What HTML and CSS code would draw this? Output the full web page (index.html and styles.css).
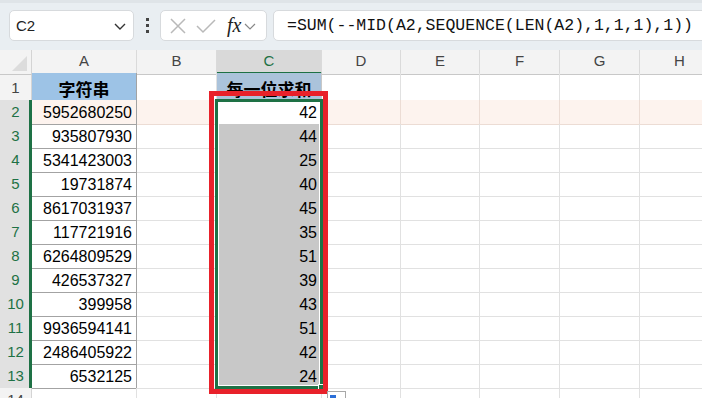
FILE: index.html
```html
<!DOCTYPE html>
<html lang="zh-CN">
<head>
    <meta charset="UTF-8">
    <title>Sheet1</title>
    <link rel="stylesheet" href="styles.css">
</head>
<body>
    <div class="toolbar">
        <div class="namebox">
            <span>C2</span>
            <svg class="chev" width="14" height="14" viewBox="0 0 14 14"><path d="M2 5l5 5 5-5" fill="none" stroke="#333" stroke-width="1.4"/></svg>
        </div>
        <div class="dots"><i></i><i></i><i></i></div>
        <div class="fxbox">
            <svg width="20" height="20" viewBox="0 0 20 20"><path d="M3 3l14 14M17 3L3 17" stroke="#b9b9b9" stroke-width="1.5" fill="none"/></svg>
            <svg width="22" height="20" viewBox="0 0 22 20"><path d="M2 10l6 6L20 4" stroke="#b9b9b9" stroke-width="1.5" fill="none"/></svg>
            <span class="fx">fx</span>
            <svg width="12" height="12" viewBox="0 0 12 12"><path d="M1 4l5 5 5-5" fill="none" stroke="#888" stroke-width="1.2"/></svg>
        </div>
        <div class="formula">=SUM(--MID(A2,SEQUENCE(LEN(A2),1,1,1),1))</div>
    </div>

    <div class="sheet">
        <div class="row head">
            <div class="corner"><b></b></div>
            <div class="ch">A</div>
            <div class="ch">B</div>
            <div class="ch on">C</div>
            <div class="ch">D</div>
            <div class="ch">E</div>
            <div class="ch">F</div>
            <div class="ch">G</div>
            <div class="ch">H</div>
        </div>
        <div class="row r1">
            <div class="rh">1</div>
            <div class="c a title">字符串</div>
            <div class="c"></div>
            <div class="c title alt">每一位求和</div>
            <div class="c"></div><div class="c"></div><div class="c"></div><div class="c"></div><div class="c"></div>
        </div>
        <div class="row cur">
            <div class="rh on">2</div>
            <div class="c a">5952680250</div>
            <div class="c"></div>
            <div class="c active">42</div>
            <div class="c"></div><div class="c"></div><div class="c"></div><div class="c"></div><div class="c"></div>
        </div>
        <div class="row">
            <div class="rh on">3</div>
            <div class="c a">935807930</div>
            <div class="c"></div>
            <div class="c sel">44</div>
            <div class="c"></div><div class="c"></div><div class="c"></div><div class="c"></div><div class="c"></div>
        </div>
        <div class="row">
            <div class="rh on">4</div>
            <div class="c a">5341423003</div>
            <div class="c"></div>
            <div class="c sel">25</div>
            <div class="c"></div><div class="c"></div><div class="c"></div><div class="c"></div><div class="c"></div>
        </div>
        <div class="row">
            <div class="rh on">5</div>
            <div class="c a">19731874</div>
            <div class="c"></div>
            <div class="c sel">40</div>
            <div class="c"></div><div class="c"></div><div class="c"></div><div class="c"></div><div class="c"></div>
        </div>
        <div class="row">
            <div class="rh on">6</div>
            <div class="c a">8617031937</div>
            <div class="c"></div>
            <div class="c sel">45</div>
            <div class="c"></div><div class="c"></div><div class="c"></div><div class="c"></div><div class="c"></div>
        </div>
        <div class="row">
            <div class="rh on">7</div>
            <div class="c a">117721916</div>
            <div class="c"></div>
            <div class="c sel">35</div>
            <div class="c"></div><div class="c"></div><div class="c"></div><div class="c"></div><div class="c"></div>
        </div>
        <div class="row">
            <div class="rh on">8</div>
            <div class="c a">6264809529</div>
            <div class="c"></div>
            <div class="c sel">51</div>
            <div class="c"></div><div class="c"></div><div class="c"></div><div class="c"></div><div class="c"></div>
        </div>
        <div class="row">
            <div class="rh on">9</div>
            <div class="c a">426537327</div>
            <div class="c"></div>
            <div class="c sel">39</div>
            <div class="c"></div><div class="c"></div><div class="c"></div><div class="c"></div><div class="c"></div>
        </div>
        <div class="row">
            <div class="rh on">10</div>
            <div class="c a">399958</div>
            <div class="c"></div>
            <div class="c sel">43</div>
            <div class="c"></div><div class="c"></div><div class="c"></div><div class="c"></div><div class="c"></div>
        </div>
        <div class="row">
            <div class="rh on">11</div>
            <div class="c a">9936594141</div>
            <div class="c"></div>
            <div class="c sel">51</div>
            <div class="c"></div><div class="c"></div><div class="c"></div><div class="c"></div><div class="c"></div>
        </div>
        <div class="row">
            <div class="rh on">12</div>
            <div class="c a">2486405922</div>
            <div class="c"></div>
            <div class="c sel">42</div>
            <div class="c"></div><div class="c"></div><div class="c"></div><div class="c"></div><div class="c"></div>
        </div>
        <div class="row">
            <div class="rh on">13</div>
            <div class="c a">6532125</div>
            <div class="c"></div>
            <div class="c sel">24</div>
            <div class="c"></div><div class="c"></div><div class="c"></div><div class="c"></div><div class="c"></div>
        </div>
        <div class="row">
            <div class="rh">14</div>
            <div class="c"></div><div class="c"></div><div class="c"></div><div class="c"></div>
            <div class="c"></div><div class="c"></div><div class="c"></div><div class="c"></div>
        </div>

        <!-- selection frame + the red highlight drawn on top -->
        <div class="selection"><span class="handle"></span></div>
        <div class="mark"></div>
        <div class="quick"><span></span></div>
    </div>
</body>
</html>
```

FILE: styles.css
```css
* {
    margin: 0;
    padding: 0;
    box-sizing: border-box;
}

body {
    width: 702px;
    height: 398px;
    overflow: hidden;
    background: #fff;
    font-family: "Liberation Sans", Arial, sans-serif;
    color: #000;
}

/* formula bar */
.toolbar {
    height: 50px;
    background: #e9eef2;
    border-top: 3px solid #dfe4e8;
    display: flex;
    align-items: flex-start;
    padding: 7px 0 0 9px;
    overflow: hidden;
}

.toolbar > * {
    flex: none;
}

.namebox {
    width: 125px;
    height: 31px;
    background: #fff;
    border: 1px solid #d7dadd;
    border-radius: 5px;
    display: flex;
    align-items: center;
    justify-content: space-between;
    padding: 0 6px 0 6px;
    font-size: 15px;
    color: #222;
}

.dots {
    width: 26px;
    height: 31px;
    display: flex;
    flex-direction: column;
    align-items: center;
    justify-content: center;
    gap: 3px;
}

.dots i {
    width: 3px;
    height: 3px;
    background: #444;
}

.fxbox {
    width: 107px;
    height: 31px;
    background: #fff;
    border: 1px solid #d7dadd;
    border-radius: 5px;
    display: flex;
    align-items: center;
    padding: 0 4px 0 7px;
    gap: 7px;
}

.fx {
    font-family: "Liberation Serif", "DejaVu Serif", serif;
    font-style: italic;
    font-size: 20px;
    color: #222;
    margin-left: 3px;
    margin-right: -4px;
}

.formula {
    width: 460px;
    height: 31px;
    margin-left: 6px;
    background: #fff;
    border: 1px solid #d7dadd;
    border-radius: 5px;
    padding: 0 0 0 13px;
    font-family: "Liberation Mono", "DejaVu Sans Mono", monospace;
    font-size: 16.5px;
    line-height: 29px;
    color: #111;
    white-space: nowrap;
}

/* grid */
.sheet {
    position: relative;
}

.row {
    display: grid;
    grid-template-columns: 32px 105px 80px 105px 79px 79px 80px 80px 80px;
    height: 24px;
}

.row.head {
    height: 23px;
}

.row.r1 {
    height: 27px;
}

.corner {
    background: #f3f3f3;
    border-right: 1px solid #d4d4d4;
    border-bottom: 1px solid #c8c8c8;
    position: relative;
}

.corner b {
    position: absolute;
    right: 4px;
    bottom: 3px;
    width: 15px;
    height: 15px;
    background: #dcdcdc;
    clip-path: polygon(100% 0, 100% 100%, 0 100%);
}

.ch {
    background: #f3f3f3;
    border-right: 1px solid #dadada;
    border-bottom: 1px solid #c8c8c8;
    text-align: center;
    font-size: 15px;
    line-height: 22px;
    color: #444;
}

.ch.on {
    background: #d9d9d9;
    color: #1e7145;
    border-bottom: 3px solid #1e7145;
}

.rh {
    background: #f3f3f3;
    border-right: 1px solid #d4d4d4;
    border-bottom: 1px solid #dadada;
    text-align: center;
    font-size: 15px;
    line-height: 24px;
    color: #444;
}

.r1 .rh {
    line-height: 30px;
}

.rh.on {
    background: #e1e1e1;
    color: #1e7145;
    border-right: 3px solid #1e7145;
    padding-left: 2px;
}

.c {
    border-right: 1px solid #e1e1e1;
    border-bottom: 1px solid #e1e1e1;
    display: flex;
    align-items: center;
    justify-content: flex-end;
    padding: 2px 4px 0 0;
    font-size: 16px;
    white-space: nowrap;
}

.c.a {
    border-right-color: #a3a3a3;
    border-bottom-color: #a3a3a3;
}

.c.title {
    justify-content: center;
    padding: 0;
    background: #9dc3e6;
    font-family: "Noto Sans CJK SC", sans-serif;
    font-weight: bold;
    font-size: 17px;
}

.c.title.alt {
    background: #abc3db;
    border-right-color: #c8c8c8;
}

.cur .c {
    background: #fdf3ee;
    border-color: #ecdcd4;
}

.cur .c.a {
    border-right-color: #a3a3a3;
    border-bottom-color: #a3a3a3;
}

.cur .c.active {
    background: #fff;
}

.c.sel {
    background: #c8c8c8;
    border-bottom-color: #8e8e8e;
}

/* overlays */
.selection {
    position: absolute;
    left: 215px;
    top: 49px;
    width: 108px;
    height: 290px;
    border: 3px solid #1e7145;
    box-shadow: inset 0 0 0 1px #fff;
}

.handle {
    position: absolute;
    right: -5px;
    bottom: -5px;
    width: 7px;
    height: 7px;
    background: #1e7145;
    border: 1px solid #fff;
}

.mark {
    position: absolute;
    left: 209px;
    top: 41px;
    width: 119px;
    height: 303px;
    border: 5px solid #e8212a;
}

.quick {
    position: absolute;
    left: 327px;
    top: 341px;
    width: 19px;
    height: 14px;
    background: #fff;
    border: 1px solid #a8a8a8;
}

.quick span {
    position: absolute;
    left: 2px;
    top: 3px;
    width: 6px;
    height: 8px;
    background: #2b6fd8;
}
```
